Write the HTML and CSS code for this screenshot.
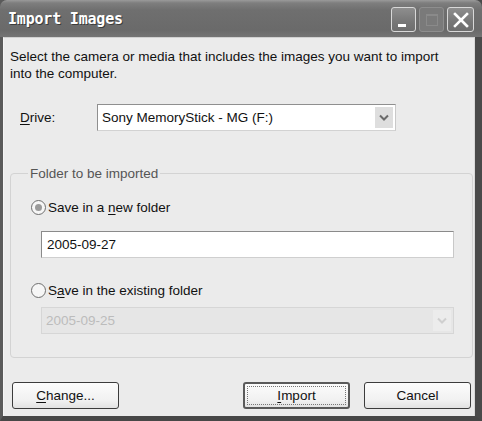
FILE: index.html
```html
<!DOCTYPE html>
<html lang="en">
<head>
    <meta charset="UTF-8">
    <title>Import Images</title>
    <link rel="stylesheet" href="styles.css">
</head>
<body>
    <div class="window">
        <div class="titlebar">
            <span class="title">Import Images</span>
            <div class="controls">
                <span class="ctl ctl-min"><span class="min-bar"></span></span>
                <span class="ctl ctl-max disabled"><span class="max-box"></span></span>
                <span class="ctl ctl-close">
                    <svg width="18" height="18" viewBox="0 0 18 18"><path d="M3 3L15 15M15 3L3 15" stroke="#fff" stroke-width="2.6" stroke-linecap="square"/></svg>
                </span>
            </div>
        </div>

        <div class="content">
            <p class="intro">Select the camera or media that includes the images you want to import into the computer.</p>

            <div class="drive-row">
                <label class="drive-label"><u>D</u>rive:</label>
                <div class="combo">
                    <span class="combo-text">Sony MemoryStick - MG (F:)</span>
                    <span class="combo-btn">
                        <svg width="10" height="7" viewBox="0 0 10 7"><path d="M1 1.5L5 5.5L9 1.5" fill="none" stroke="#6a6a6a" stroke-width="2"/></svg>
                    </span>
                </div>
            </div>

            <fieldset class="group">
                <legend>Folder to be imported</legend>

                <div class="radio-row">
                    <span class="radio checked"></span>
                    <span>Save in a <u>n</u>ew folder</span>
                </div>
                <div class="textbox">2005-09-27</div>

                <div class="radio-row second">
                    <span class="radio"></span>
                    <span>S<u>a</u>ve in the existing folder</span>
                </div>
                <div class="combo wide disabled">
                    <span class="combo-text">2005-09-25</span>
                    <span class="combo-btn">
                        <svg width="10" height="7" viewBox="0 0 10 7"><path d="M1 1.5L5 5.5L9 1.5" fill="none" stroke="#cfcfcf" stroke-width="2"/></svg>
                    </span>
                </div>
            </fieldset>

            <div class="buttons">
                <button type="button" class="btn"><u>C</u>hange...</button>
                <button type="button" class="btn default"><span class="focus"><u>I</u>mport</span></button>
                <button type="button" class="btn cancel">Cancel</button>
            </div>
        </div>
    </div>
</body>
</html>
```

FILE: styles.css
```css
html, body {
    margin: 0;
    padding: 0;
}

body {
    width: 482px;
    height: 421px;
    font-family: "Liberation Sans", Arial, sans-serif;
    font-size: 13.5px;
    color: #111;
    background: #4e4e4e;
}

u {
    text-decoration: underline;
    text-underline-offset: 2px;
}

.window {
    box-sizing: border-box;
    width: 482px;
    height: 421px;
    display: flex;
    flex-direction: column;
    background: #565656;
    border-left: 3px solid #5a5a5a;
    border-right: 7px solid #4a4a4a;
    border-bottom: 5px solid #474747;
}

.titlebar {
    height: 37px;
    display: flex;
    align-items: center;
    justify-content: space-between;
    background: linear-gradient(to bottom, #9a9a9a 0, #7e7e7e 3px, #6f6f6f 10px, #6a6a6a 30px, #747474 100%);
    margin-left: -3px;
    margin-right: -7px;
    padding: 0 8px 0 8px;
    border-radius: 7px 7px 0 0;
}

.title {
    font-family: "DejaVu Sans Mono", "DejaVu Sans", monospace;
    font-weight: bold;
    font-size: 15px;
    color: #fff;
    letter-spacing: -0.2px;
    text-shadow: 1px 1px 0 #3c3c3c;
    margin-top: 1px;
}

.controls {
    display: flex;
    gap: 3px;
    margin-top: 2px;
}

.ctl {
    box-sizing: border-box;
    width: 25px;
    height: 25px;
    border: 1px solid #d8d8d8;
    border-radius: 3px;
    background: linear-gradient(to bottom, #8e8e8e, #777 60%, #6e6e6e);
    display: flex;
    align-items: center;
    justify-content: center;
}

.ctl-close {
    width: 27px;
}

.ctl.disabled {
    border-color: #8e8e8e;
    background: #7a7a7a;
}

.min-bar {
    width: 8px;
    height: 3px;
    background: #fff;
    margin-top: 12px;
    margin-right: 4px;
}

.max-box {
    width: 10px;
    height: 9px;
    border: 1px solid #8a8a8a;
    border-top-width: 2px;
}

.content {
    flex: 1;
    background: #ebebeb;
    border-top: 1px solid #d0d0d0;
    border-left: 1px solid #f4f4f4;
    border-right: 1px solid #d9d9d9;
    padding: 10px 0 0 6px;
    display: flex;
    flex-direction: column;
}

.intro {
    margin: 0;
    line-height: 17px;
    padding-right: 20px;
}

.drive-row {
    display: flex;
    align-items: center;
    margin-top: 22px;
    padding-left: 10px;
}

.drive-label {
    width: 77px;
}

.combo {
    box-sizing: border-box;
    width: 299px;
    height: 27px;
    display: flex;
    align-items: center;
    justify-content: space-between;
    background: #fff;
    border: 1px solid #8f8f8f;
    border-right-color: #c9c9c9;
    border-bottom-color: #d2d2d2;
    padding: 0 2px 0 4px;
}

.combo-btn {
    width: 18px;
    height: 21px;
    background: #dedede;
    display: flex;
    align-items: center;
    justify-content: center;
}

.group {
    box-sizing: border-box;
    margin: 35px 0 0 0;
    width: 463px;
    height: 192px;
    border: 1px solid #d3d3d3;
    border-radius: 4px;
    padding: 0 0 0 20px;
}

.group legend {
    color: #555;
    padding: 0 2px;
    margin-left: -3px;
}

.radio-row {
    display: flex;
    align-items: center;
    gap: 2px;
    margin-top: 19px;
}

.radio-row.second {
    margin-top: 25px;
}

.radio {
    box-sizing: border-box;
    width: 15px;
    height: 15px;
    border: 1px solid #6e6e6e;
    border-radius: 50%;
    background: #f6f6f6;
    display: flex;
    align-items: center;
    justify-content: center;
}

.radio.checked::after {
    content: "";
    width: 7px;
    height: 7px;
    border-radius: 50%;
    background: #9a9a9a;
}

.textbox {
    box-sizing: border-box;
    margin: 16px 0 0 10px;
    width: 413px;
    height: 27px;
    background: #fff;
    border: 1px solid #8a8a8a;
    border-right-color: #c8c8c8;
    border-bottom-color: #cfcfcf;
    padding: 5px 5px;
    line-height: 16px;
}

.combo.wide {
    width: 413px;
    margin: 9px 0 0 10px;
}

.combo.disabled {
    background: #e6e6e6;
    border-color: #d6d6d6;
    color: #bcbcbc;
}

.combo.disabled .combo-btn {
    background: #ececec;
}

.buttons {
    display: flex;
    margin-top: 24px;
    padding-left: 2px;
}

.btn {
    box-sizing: border-box;
    width: 107px;
    height: 27px;
    font-family: inherit;
    font-size: 13.5px;
    color: #111;
    background: linear-gradient(to bottom, #fcfcfc, #f1f1f1 70%, #e2e2e2);
    border: 1px solid #3c3c3c;
    border-radius: 3px;
    padding: 0;
    display: flex;
    align-items: center;
    justify-content: center;
}

.btn.default {
    margin-left: 124px;
    border: 2px solid #5a5a5a;
    padding: 2px;
}

.btn.cancel {
    margin-left: 14px;
}

.focus {
    flex: 1;
    align-self: stretch;
    display: flex;
    align-items: center;
    justify-content: center;
    border: 1px dotted #777;
}
```
